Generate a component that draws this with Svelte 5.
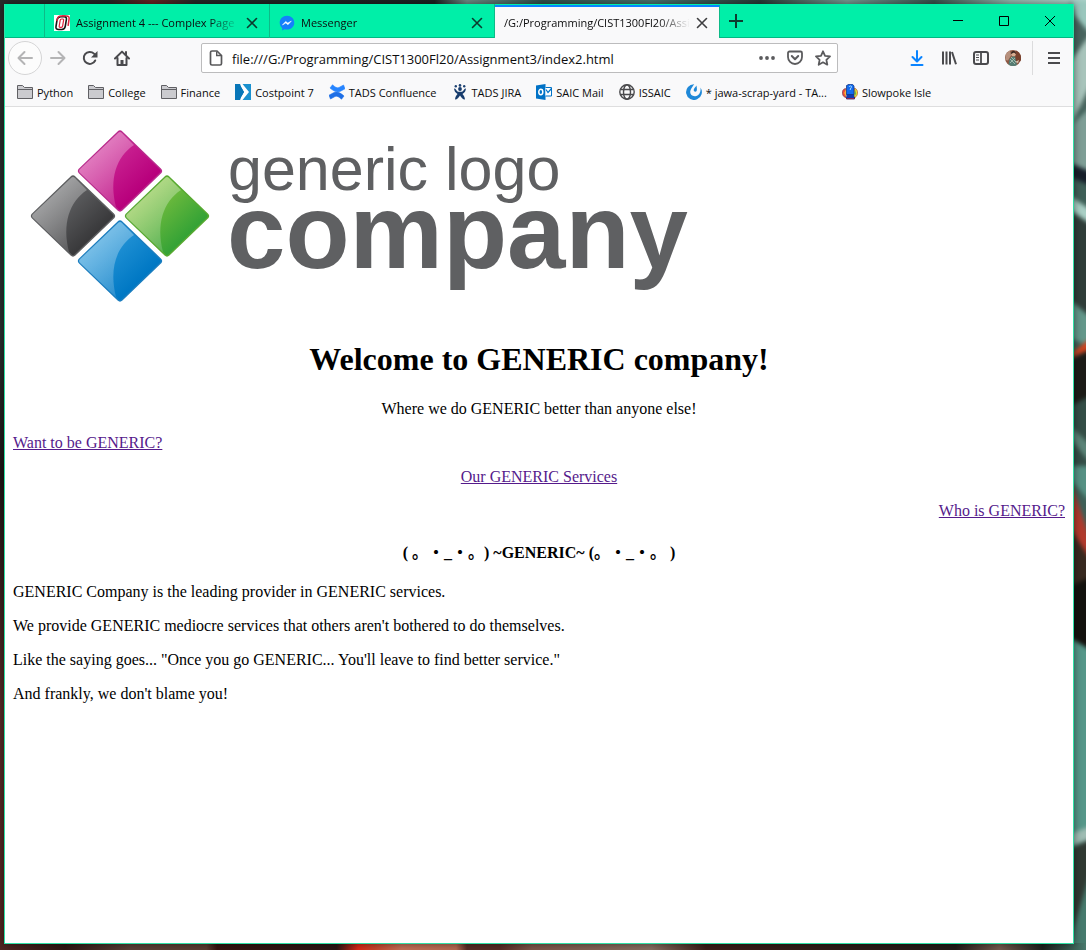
<script>
  let address = $state('file:///G:/Programming/CIST1300Fl20/Assignment3/index2.html');
  const tabs = [
    { icon: 'omaha', title: 'Assignment 4 --- Complex Page' },
    { icon: 'messenger', title: 'Messenger' },
    { icon: '', title: '/G:/Programming/CIST1300Fl20/Assignment3', active: true }
  ];
  const bookmarks = [
    { icon: 'folder', label: 'Python' },
    { icon: 'folder', label: 'College' },
    { icon: 'folder', label: 'Finance' },
    { icon: 'costpoint', label: 'Costpoint 7' },
    { icon: 'confluence', label: 'TADS Confluence' },
    { icon: 'jira', label: 'TADS JIRA' },
    { icon: 'outlook', label: 'SAIC Mail' },
    { icon: 'globe', label: 'ISSAIC' },
    { icon: 'mattermost', label: '* jawa-scrap-yard - TA...' },
    { icon: 'slowpoke', label: 'Slowpoke Isle' }
  ];
  const tiles = [
    { id: 'pink', x: 107, y: 56, from: '#d0309a', to: '#b8007c', edge: '#b92a8c' },
    { id: 'grey', x: 60, y: 101, from: '#6a6b6d', to: '#3a3a3c', edge: '#5c5d5f' },
    { id: 'green', x: 154, y: 101, from: '#86c440', to: '#36a336', edge: '#57a930' },
    { id: 'blue', x: 107, y: 146, from: '#2d9bdb', to: '#0078c4', edge: '#1a7dbf' }
  ];
</script>

{#snippet icon(name)}
  <svg class="icon" width="16" height="16" viewBox="0 0 16 16" fill="none" aria-hidden="true">
    {#if name === 'omaha'}
      <path d="M0 0h16v16H0z" fill="#fff" />
      <path d="M8 .9h4.500q3 0 2.600 3l-1 7" stroke="#e0213c" stroke-width="1.500" />
      <path d="M6.800 1.800h3.400q2.600 0 2.200 2.700l-1.100 6.700q-.5 3.300-3.500 3.300H4.600Q1.500 14.500 2 11.500l1-6.400q.6-3.300 3.800-3.300z" stroke="#151515" stroke-width="1.600" />
      <path d="M2.800 6 3.200 4.500Q3.900 1 7 1h4.500" stroke="#e0213c" stroke-width="1.300" />
      <path d="M7.600 4h1.200q1 0 .8 1.200l-1 6q-.2 1.100-1.300 1.100H6q-1 0-.8-1.200l1-6Q6.400 4 7.600 4z" stroke="#e0213c" stroke-width="1.200" />
    {:else if name === 'messenger'}
      <path d="M8 .8C3.800.8.7 3.800.7 7.800c0 2.200 1 4 2.500 5.200v2.500l2.300-1.200c.8.2 1.600.3 2.500.3 4.200 0 7.300-3 7.300-6.800S12.200.8 8 .8z" fill="#1480fb" />
      <path d="M3.400 10 6.700 6.400l2.100 1.700 3.500-2-3.300 3.600-2.200-1.700z" fill="#fff" stroke="#fff" stroke-width=".5" />
    {:else if name === 'folder'}
      <path d="M.5 14.500V1.500h5l2 2h8v11z" fill="#cbcbcf" stroke="#606064" />
      <path d="M1 5.500h14.500" stroke="#606064" />
    {:else if name === 'costpoint'}
      <path d="M7 0h9v16H7z" fill="#1b91cf" />
      <path d="M4 0h3.500L14 8l-6.500 8H4l5-8z" fill="#fff" />
      <path d="M0 0h5l4 8-4 8H0z" fill="#0876b8" />
      <path d="M5.500 1.500H8L13 8l-5 6.500H5.500L9.500 8z" fill="#fff" />
    {:else if name === 'confluence'}
      <path d="M1 4 3.500 .8C6 3 8 4.500 10 3.500L14.500 1 16 4.800l-4.500 2.400C8 9 4.500 7 1 4z" fill="#2684ff" stroke="#2684ff" stroke-width=".6" stroke-linejoin="round" />
      <path d="M15 12l-2.500 3.200C10 13 8 11.500 6 12.500L1.500 15 0 11.200l4.500-2.400C8 7 11.500 9 15 12z" fill="#1d6ee6" stroke="#1d6ee6" stroke-width=".6" stroke-linejoin="round" />
    {:else if name === 'jira'}
      <circle cx="3.800" cy="2.200" r="1.200" fill="#1d4272" /><circle cx="8" cy="1.400" r="1.300" fill="#1d4272" /><circle cx="12.200" cy="2.200" r="1.200" fill="#1d4272" />
      <circle cx="8" cy="5" r="1.900" fill="#173c6d" />
      <path d="M2 4.500c2 0 2 1.500 3 2.500s2 .8 3 .8 2 .2 3-.8 1-2.500 3-2.500c-.5 2.500-1 4-3.500 5.500 1.500 1.500 2.200 3 2.500 5.500-2.500 0-3.500-2-5-4-1.500 2-2.500 4-5 4 .3-2.500 1-4 2.500-5.500C3 8.500 2.500 7 2 4.500z" fill="#173c6d" />
    {:else if name === 'outlook'}
      <path d="M0 1.500 9.500 0v16L0 14.500z" fill="#0072c6" />
      <ellipse cx="4.800" cy="8" rx="2" ry="2.700" stroke="#fff" stroke-width="1.500" />
      <path d="M9.500 3.500h6v8.500h-6" stroke="#0072c6" fill="#fff" />
      <path d="m10 5.500 2 3L15.500 4.500" stroke="#0072c6" stroke-width="1.200" />
    {:else if name === 'globe'}
      <g stroke="#4a4a4d" stroke-width="1.400"><circle cx="8" cy="8" r="7.200" /><ellipse cx="8" cy="8" rx="3.500" ry="7.200" /><path d="M1.500 5.500h13M1.500 10.500h13" /></g>
    {:else if name === 'mattermost'}
      <path d="M8.200.2A7.900 7.900 0 1 0 14.400 3.500c.8 3.500-1 8.500-5.200 8.800-4 .2-5.600-2.800-4.800-5.600C5 4.500 6.800 2.200 8.200.2z" fill="#1e88d8" />
      <path d="M10.500 1.500c.3 2.500.7 4 .2 5.300-.6 1.500-3 1.200-3-.7 0-1.600 1.800-2.800 2.800-4.600z" fill="#1e88d8" />
    {:else if name === 'slowpoke'}
      <path d="M3.500 4.500C1 5 .2 7 .5 9.500S2 13 4 13.500z" fill="#ef4b38" stroke="#72344b" stroke-width=".7" />
      <path d="M4 5 2.200 9l2 4.500z" fill="#f8b23c" />
      <path d="M12.500 4c2.500 1 3.300 3 3 5.500s-2 4-4 5z" fill="#f3d92f" stroke="#b35b38" stroke-width=".7" />
      <path d="m13 5.500 1.200 4-2 4z" fill="#62b94a" />
      <path d="M4.500 13h8v2h-8z" fill="#cf2f4c" stroke="#321d5c" stroke-width=".8" />
      <path d="M4.500 9.500h7.500V14H4.500z" fill="#153bb0" />
      <path d="M4.500 1.500 7 .3h3.500L12 2v8.500H4.500z" fill="#126bf0" stroke="#153984" stroke-width=".8" />
      <path d="M7 3c1-2 3.500-.8 2.200.7L8.300 5v1" stroke="#a8dfff" />
    {:else if name === 'page'}
      <path d="M4 1h5l4.500 4.500v8A1.500 1.500 0 0 1 12 15H4a1.500 1.500 0 0 1-1.500-1.500v-11A1.500 1.500 0 0 1 4 1z" stroke="#58585a" stroke-width="1.700" />
      <path d="M8.700 1.500v4h4.500" stroke="#58585a" stroke-width="1.400" />
    {:else if name === 'back' || name === 'forward'}
      <g transform={name === 'forward' ? 'matrix(-1 0 0 1 16 0)' : undefined} stroke="#b4b4b5" stroke-width="2" stroke-linecap="round" stroke-linejoin="round"><path d="M7.500 2 1.500 8l6 6M2 8h13" /></g>
    {:else if name === 'reload'}
      <path d="M13.200 10.500A6 6 0 1 1 12 3.600l1.500 1.600" stroke="#4a4a4d" stroke-width="2" stroke-linecap="round" />
      <path d="M15.500 1v6.500H9z" fill="#4a4a4d" />
    {:else if name === 'home'}
      <path d="M1 8.500 8 1.600l7 6.900M3.500 8v7h9V8M12 2v3" stroke="#4a4a4d" stroke-width="2" stroke-linecap="round" stroke-linejoin="round" />
      <path d="M6.500 15v-5h3v5z" fill="#4a4a4d" />
    {:else if name === 'dots'}
      <g fill="#5b5b5d"><circle cx="2" cy="8" r="1.900" /><circle cx="8" cy="8" r="1.900" /><circle cx="14" cy="8" r="1.900" /></g>
    {:else if name === 'pocket'}
      <path d="M2.500 1.500h11A1.500 1.500 0 0 1 15 3v4a7 7 0 0 1-14 0V3a1.500 1.500 0 0 1 1.500-1.500z" stroke="#5b5b5d" stroke-width="1.800" />
      <path d="m4.800 6 3.200 3.200L11.200 6" stroke="#5b5b5d" stroke-width="2" stroke-linecap="round" stroke-linejoin="round" />
    {:else if name === 'star'}
      <path d="m8 1.300 2 4.500 5 .6-3.600 3.400.9 4.900L8 12.300l-4.300 2.400.9-4.900L1 6.400l5-.6z" stroke="#5b5b5d" stroke-width="1.800" stroke-linejoin="round" />
    {:else if name === 'download'}
      <path d="M8 1v10M3.500 7 8 11.500 12.500 7M2.500 15h11" stroke="#0a84ff" stroke-width="2" stroke-linecap="round" stroke-linejoin="round" />
    {:else if name === 'library'}
      <path d="M2 1.500v13M5.500 1.500v13M9 1.500v13M11 2l4 12.200" stroke="#4a4a4d" stroke-width="2" />
    {:else if name === 'sidebar'}
      <rect x="1" y="2" width="14" height="12" rx="2" stroke="#4a4a4d" stroke-width="2" />
      <path d="M8 2v12" stroke="#4a4a4d" stroke-width="1.800" /><path d="M3 5h3M3 7.500h3M3 10h3" stroke="#4a4a4d" />
    {:else if name === 'avatar'}
      <circle cx="8" cy="8" r="8" fill="#8d5844" />
      <path d="M1 4.200A8 8 0 0 1 5 .6l1 5-3 5-2.800-.5z" fill="#b7917d" /><path d="M11 .6A8 8 0 0 1 15.500 11L10 13z" fill="#79412d" />
      <circle cx="8.500" cy="4.200" r="2.200" fill="#d8ad91" /><path d="M6 4c0-4 5-4 5 0L9 2.500z" fill="#30221d" />
      <path d="M3.500 14.600 4.500 9 7 6.500h3l2 8.400a8 8 0 0 1-8.500-.3z" fill="#557c72" /><path d="m5 9 5 5M10 8l-5 5M6 7l5 5" stroke="#b0c6b9" stroke-width=".8" /><path d="m10 12 4-2-1 3z" fill="#dbc4b2" />
    {:else if name === 'menu'}
      <path d="M2 3h12M2 8h12M2 13h12" stroke="#4a4a4d" stroke-width="2" />
    {:else if name === 'close'}
      <path d="m3.500 3.500 9 9m0-9-9 9" stroke="currentColor" stroke-width="1.600" stroke-linecap="round" />
    {:else if name === 'plus'}
      <path d="M8 1v14M1 8h14" stroke="#0c3e30" stroke-width="2" />
    {:else if name === 'minimize'}
      <path d="M3 7.500h10" stroke="#000" />
    {:else if name === 'maximize'}
      <path d="M3.500 3.500h9v9h-9z" stroke="#000" />
    {:else if name === 'quit'}
      <path d="m3 3 10 10m0-10L3 13" stroke="#000" />
    {/if}
  </svg>
{/snippet}

<div class="desktop">
  <svg class="wallpaper" viewBox="0 0 1086 950" preserveAspectRatio="none" aria-hidden="true">
    <defs>
      <linearGradient id="w-top"><stop offset="0" stop-color="#292c2b" /><stop offset=".1" stop-color="#252525" /><stop offset=".14" stop-color="#6b2422" /><stop offset=".18" stop-color="#252827" /><stop offset=".4" stop-color="#1c2222" /><stop offset=".43" stop-color="#708f88" /><stop offset=".5" stop-color="#31524b" /><stop offset=".6" stop-color="#4b756d" /><stop offset=".7" stop-color="#283c38" /><stop offset=".78" stop-color="#789d95" /><stop offset=".86" stop-color="#38544e" /><stop offset=".93" stop-color="#93b8ae" /><stop offset="1" stop-color="#b7d7d0" /></linearGradient>
      <linearGradient id="w-bottom"><stop offset="0" stop-color="#512621" /><stop offset=".06" stop-color="#2d1713" /><stop offset=".12" stop-color="#5b4137" /><stop offset=".19" stop-color="#5b3e32" /><stop offset=".2" stop-color="#35130f" /><stop offset=".31" stop-color="#2b1715" /><stop offset=".33" stop-color="#df2818" /><stop offset=".345" stop-color="#c9452d" /><stop offset=".37" stop-color="#c67258" /><stop offset=".42" stop-color="#b86b52" /><stop offset=".43" stop-color="#572c24" /><stop offset=".46" stop-color="#572c24" /><stop offset=".49" stop-color="#7d5749" /><stop offset=".6" stop-color="#887062" /><stop offset=".65" stop-color="#3b1e19" /><stop offset=".88" stop-color="#211c19" /><stop offset=".92" stop-color="#765c50" /><stop offset=".96" stop-color="#1c211d" /><stop offset="1" stop-color="#49796d" /></linearGradient>
      <linearGradient id="w-left" x2="0" y2="1"><stop offset="0" stop-color="#292b2a" /><stop offset=".35" stop-color="#29302f" /><stop offset=".5" stop-color="#1d1615" /><stop offset=".75" stop-color="#562c27" /><stop offset="1" stop-color="#512520" /></linearGradient>
    </defs>
    <path d="M0 0h1086v950H0z" fill="#263532" />
    <path d="M0 0h1086v6H0z" fill="url(#w-top)" />
    <path d="M0 4h8v940H0z" fill="url(#w-left)" />
    <g class="artwork">
      <path d="M1070 0h24v950h-24z" fill="#3f6058" />
      <path d="M1070 0h24v40l-12-9-8-17z" fill="#9bc8be" />
      <path d="m1070 10 24 28v75l-24-7z" fill="#49655f" />
      <path d="m1070 62 24-33v48l-24 50z" fill="#a9c5bc" />
      <path d="m1070 126 24-22v74l-24-8z" fill="#7f9f97" />
      <path d="m1070 163 24 10v14l-24-10z" fill="#17202b" />
      <path d="m1070 196 24 16v14l-24-16z" fill="#abd1c7" />
      <path d="m1070 211 24 16v100l-24-22z" fill="#303e3a" />
      <path d="m1070 300 24 20v28l-24-10z" fill="#64988b" />
      <path d="m1070 354 24-18v12l-24 10z" fill="#d5441e" />
      <path d="m1070 359 24-11v48l-24 12z" fill="#1d1c18" />
      <path d="m1070 406 24-12v104l-24-32z" fill="#344e47" />
      <path d="m1070 426 24 22v20l-24-30z" fill="#5c8579" />
      <path d="M1070 466h24v40l-24-27z" fill="#579285" />
      <path d="m1070 480 24 70v27l-24-50z" fill="#b33b2d" />
      <path d="m1070 528 24 37v32l-24-9z" fill="#382a20" />
      <path d="m1070 586 24-10v76l-24-14z" fill="#14130f" />
      <path d="m1070 638 24 14v200l-24 11z" fill="#56988a" />
      <path d="m1070 834 24-9v13l-24 8z" fill="#a0bdb4" />
      <path d="m1070 848 24-10v32l-24 72z" fill="#303a33" />
      <path d="m1070 940 24-80v94h-24z" fill="#477b6e" />
    </g>
    <path d="M0 943h1086v7H0z" fill="url(#w-bottom)" />
  </svg>

  <div class="window">
    <header>
      <div class="titlebar">
        <div class="tabs" role="tablist" aria-label="Open tabs">
          {#each tabs as tab}
            <div class="tab" class:active={tab.active}>
              <button class="tab-name" role="tab" aria-selected={!!tab.active}>
                {#if tab.icon}{@render icon(tab.icon)}{/if}
                <span class="tab-title">{tab.title}</span>
              </button>
              <button class="tab-close" aria-label="Close tab">{@render icon('close')}</button>
            </div>
          {/each}
        </div>
        <button class="new-tab" aria-label="New tab">{@render icon('plus')}</button>
        <div class="controls">
          <button aria-label="Minimize">{@render icon('minimize')}</button>
          <button aria-label="Maximize">{@render icon('maximize')}</button>
          <button aria-label="Close window">{@render icon('quit')}</button>
        </div>
      </div>

      <div class="toolbar">
        <button class="back" aria-label="Back">{@render icon('back')}</button>
        <button class="tool" aria-label="Forward">{@render icon('forward')}</button>
        <button class="tool" aria-label="Reload">{@render icon('reload')}</button>
        <button class="tool" aria-label="Home">{@render icon('home')}</button>
        <span class="spacer"></span>
        <div class="address">
          {@render icon('page')}
          <input type="text" aria-label="Address" spellcheck="false" bind:value={address} />
          <button aria-label="Page actions">{@render icon('dots')}</button>
          <button aria-label="Save to Pocket">{@render icon('pocket')}</button>
          <button aria-label="Bookmark this page">{@render icon('star')}</button>
        </div>
        <span class="spacer"></span>
        <button class="tool" aria-label="Downloads">{@render icon('download')}</button>
        <button class="tool" aria-label="Library">{@render icon('library')}</button>
        <button class="tool" aria-label="Sidebars">{@render icon('sidebar')}</button>
        <button class="tool" aria-label="Account">{@render icon('avatar')}</button>
        <span class="divider"></span>
        <button class="tool" aria-label="Menu">{@render icon('menu')}</button>
      </div>

      <nav class="bookmarks" aria-label="Bookmarks">
        {#each bookmarks as mark}
          <a href="#bookmark">{@render icon(mark.icon)}<span>{mark.label}</span></a>
        {/each}
      </nav>
    </header>

    <main>
      <svg class="logo" width="690" height="205" viewBox="0 0 690 205" role="img" aria-label="generic logo company">
        <defs>
          <linearGradient id="gloss" x1="0" y1="0" x2=".6" y2="1"><stop offset="0" stop-color="#fff" stop-opacity=".46" /><stop offset="1" stop-color="#fff" stop-opacity=".16" /></linearGradient>
          {#each tiles as tile}
            <linearGradient id={tile.id} x1="0" y1="0" x2="1" y2="1"><stop offset=".2" stop-color={tile.from} /><stop offset=".75" stop-color={tile.to} /></linearGradient>
          {/each}
        </defs>
        {#each tiles as tile}
          <g transform="translate({tile.x} {tile.y})">
            <path d="M0-37 38.500 0 0 37-38.500 0z" fill={tile.edge} stroke={tile.edge} stroke-width="7" stroke-linejoin="round" />
            <path d="M0-37 38.500 0 0 37-38.500 0z" fill="url(#{tile.id})" stroke="url(#{tile.id})" stroke-width="4" stroke-linejoin="round" />
            <path d="M-40-2-2-38q2-2 4 0L14-26C-4-14-11 8-4 36L-2 38-40 2q-2-2 0-4z" fill="url(#gloss)" />
          </g>
        {/each}
        <text class="light" x="215" y="75">generic logo</text>
        <text class="heavy" x="214" y="153">company</text>
      </svg>
      <h1>Welcome to GENERIC company!</h1>
      <p class="center">Where we do GENERIC better than anyone else!</p>
      <p><a href="#join">Want to be GENERIC?</a></p>
      <p class="center"><a href="#services">Our GENERIC Services</a></p>
      <p class="right"><a href="#about">Who is GENERIC?</a></p>
      <h4>( 。・_・。) ~GENERIC~ (。・_・。 )</h4>
      <p>GENERIC Company is the leading provider in GENERIC services.</p>
      <p>We provide GENERIC mediocre services that others aren't bothered to do themselves.</p>
      <p>Like the saying goes... "Once you go GENERIC... You'll leave to find better service."</p>
      <p>And frankly, we don't blame you!</p>
    </main>
  </div>
</div>

<style>
  :global(body) { margin: 0; }
  .desktop { position: relative; box-sizing: border-box; display: flex; min-height: 100vh; padding: 4px 12px 6px 4px; }
  .wallpaper { position: absolute; inset: 0; width: 100%; height: 100%; }
  .artwork { filter: blur(2px); }
  .window { position: relative; flex: 1; min-width: 0; box-sizing: border-box; border: 1px solid #2fe0a6; border-top: 0; background: #fff; box-shadow: 0 0 8px rgba(0, 0, 0, .5); }
  header { font-family: "Open Sans", "Noto Sans", sans-serif; font-size: 11px; color: #0c0c0d; background: #f9f9fa; border-bottom: 1px solid #dededf; }
  button { display: flex; align-items: center; justify-content: center; padding: 0; border: 0; background: none; font: inherit; color: inherit; }
  .icon { display: block; flex: none; }
  .titlebar { display: flex; align-items: stretch; box-sizing: border-box; height: 34px; padding-left: 39px; background: #00efa8; box-shadow: inset 0 -1px #00b883; }
  .tabs { display: flex; min-width: 0; border-left: 1px solid #0dbb88; }
  .tab { display: flex; align-items: center; box-sizing: border-box; width: 225px; min-width: 0; padding: 3px 9px 0 9px; border-right: 1px solid #0dbb88; color: #0b3b2e; }
  .tab.active { background: #f9f9fa; border-top: 2px solid #0a84ff; margin-top: 1px; padding-top: 0; color: #3e3e40; }
  .tab-name { flex: 1; min-width: 0; gap: 6px; justify-content: flex-start; color: #0c0c0d; }
  .tab-title { flex: 1; min-width: 0; overflow: hidden; white-space: nowrap; text-align: left; line-height: 18px; mask-image: linear-gradient(to left, transparent, #000 32px); }
  .tab-close { margin-left: 4px; }
  .new-tab { width: 32px; }
  .controls { display: flex; margin-left: auto; }
  .controls button { width: 46px; }
  .toolbar { display: flex; align-items: center; height: 40px; padding: 0 3px; }
  .back { box-sizing: border-box; flex: none; width: 34px; height: 34px; border: 1px solid #d5d5d6; border-radius: 50%; background: #fcfcfc; }
  .tool { flex: none; width: 32px; height: 32px; }
  .spacer { flex: 1; }
  .divider { width: 1px; height: 34px; margin: 0 5px 0 3px; background: #dcdcdd; }
  .address { flex: 10; min-width: 0; display: flex; align-items: center; box-sizing: border-box; height: 30px; padding: 0 0 0 6px; border: 1px solid #bcbcbd; border-radius: 2px; background: #fff; }
  .address input { flex: 1; min-width: 0; padding: 2px 8px 0; border: 0; outline: 0; background: none; color: #0c0c0d; font: 13px "Open Sans", "Noto Sans", sans-serif; }
  .address button { width: 28px; height: 28px; }
  .bookmarks { display: flex; align-items: center; gap: 15px; height: 28px; padding: 0 12px; white-space: nowrap; overflow: hidden; }
  .bookmarks a { display: flex; align-items: center; gap: 4px; color: #0c0c0d; text-decoration: none; }
  main { padding: 8px; font-family: "Liberation Serif", "Noto Sans CJK JP", serif; font-size: 16px; line-height: 18px; color: #000; }
  .logo { display: block; max-width: 100%; }
  .logo text { fill: #5f6062; font-family: "Liberation Sans", Arial, sans-serif; }
  .logo .light { font-size: 61px; }
  .logo .heavy { font-size: 105px; font-weight: 700; }
  h1 { margin: 21px 0 22px; font-size: 32px; line-height: 37px; text-align: center; }
  h4 { margin: 22px 0 20px; font-size: 16px; line-height: 21px; text-align: center; text-spacing-trim: space-all; }
  p { margin: 16px 0; }
  main a { color: #551a8b; }
  .center { text-align: center; }
  .right { text-align: right; }
</style>
